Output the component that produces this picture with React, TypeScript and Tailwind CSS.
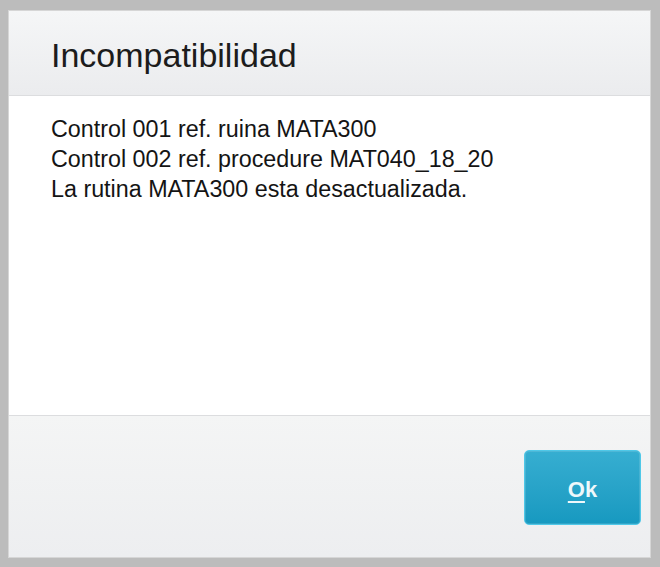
import React from "react";

export default function App() {
  return (
    <div
      className="w-[660px] h-[567px] bg-[#bcbcbc] pt-[10px] pl-[8px] pr-[9px] pb-[9px] flex"
      style={{ fontFamily: '"Liberation Sans", Arial, sans-serif' }}
    >
      <div className="flex-1 flex flex-col border border-[#d6d6d6] bg-white">
        <div className="h-[85px] shrink-0 border-b border-[#dcdddf] bg-gradient-to-b from-[#f5f6f7] to-[#ebecee] pt-[27px] pl-[42px]">
          <h1 className="text-[34px] leading-[34px] text-[#1c1c1c]">Incompatibilidad</h1>
        </div>
        <div className="flex-1 bg-white pt-[18px] pl-[42px] text-[23.3px] leading-[30px] text-[#141414]">
          <p>Control 001 ref. ruina MATA300</p>
          <p>Control 002 ref. procedure MAT040_18_20</p>
          <p>La rutina MATA300 esta desactualizada.</p>
        </div>
        <div className="h-[142px] shrink-0 border-t border-[#dcdddf] bg-gradient-to-b from-[#f4f5f5] to-[#edeef0] pt-[34px] pr-[9px] flex justify-end items-start">
          <button className="w-[117px] h-[75px] rounded-[5px] border border-[#4fc8e8] bg-gradient-to-b from-[#36aed1] to-[#1699c0] text-[#eef8fb] text-[22px] font-bold flex items-center justify-center pt-[4px] shadow-[inset_0_0_0_1px_rgba(255,255,255,0.12)]">
            <span>
              <span className="underline underline-offset-[4px] decoration-[2px]">O</span>k
            </span>
          </button>
        </div>
      </div>
    </div>
  );
}
